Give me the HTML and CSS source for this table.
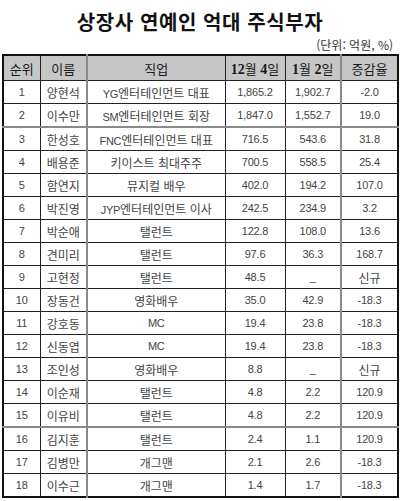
FILE: index.html
```html
<!DOCTYPE html>
<html lang="ko">
<head>
<meta charset="utf-8">
<title>상장사 연예인 억대 주식부자</title>
<link rel="stylesheet" href="styles.css">
</head>
<body>
<div class="page">
  <h1 class="title">상장사 연예인 억대 주식부자</h1>
  <div class="unit">(단위: 억원, %)</div>
  <table class="stock">
    <colgroup>
      <col class="c1"><col class="c2"><col class="c3"><col class="c4"><col class="c5"><col class="c6">
    </colgroup>
    <thead>
      <tr>
        <th>순위</th><th class="gl">이름</th><th>직업</th><th><span class="d">12</span>월 <span class="d">4</span>일</th><th class="gr"><span class="d">1</span>월 <span class="d">2</span>일</th><th>증감율</th>
      </tr>
    </thead>
    <tbody>
      <tr><td class="n">1</td><td class="gl">양현석</td><td><span class="en">YG</span>엔터테인먼트 대표</td><td class="n">1,865.2</td><td class="n gr">1,902.7</td><td class="n">-2.0</td></tr>
      <tr class="thick"><td class="n">2</td><td class="gl">이수만</td><td><span class="en">SM</span>엔터테인먼트 회장</td><td class="n">1,847.0</td><td class="n gr">1,552.7</td><td class="n">19.0</td></tr>
      <tr><td class="n">3</td><td class="gl">한성호</td><td><span class="en">FNC</span>엔터테인먼트 대표</td><td class="n">716.5</td><td class="n gr">543.6</td><td class="n">31.8</td></tr>
      <tr><td class="n">4</td><td class="gl">배용준</td><td>키이스트 최대주주</td><td class="n">700.5</td><td class="n gr">558.5</td><td class="n">25.4</td></tr>
      <tr><td class="n">5</td><td class="gl">함연지</td><td>뮤지컬 배우</td><td class="n">402.0</td><td class="n gr">194.2</td><td class="n">107.0</td></tr>
      <tr><td class="n">6</td><td class="gl">박진영</td><td><span class="en">JYP</span>엔터테인먼트 이사</td><td class="n">242.5</td><td class="n gr">234.9</td><td class="n">3.2</td></tr>
      <tr><td class="n">7</td><td class="gl">박순애</td><td>탤런트</td><td class="n">122.8</td><td class="n gr">108.0</td><td class="n">13.6</td></tr>
      <tr><td class="n">8</td><td class="gl">견미리</td><td>탤런트</td><td class="n">97.6</td><td class="n gr">36.3</td><td class="n">168.7</td></tr>
      <tr><td class="n">9</td><td class="gl">고현정</td><td>탤런트</td><td class="n">48.5</td><td class="n gr">_</td><td>신규</td></tr>
      <tr><td class="n">10</td><td class="gl">장동건</td><td>영화배우</td><td class="n">35.0</td><td class="n gr">42.9</td><td class="n">-18.3</td></tr>
      <tr><td class="n">11</td><td class="gl">강호동</td><td class="en">MC</td><td class="n">19.4</td><td class="n gr">23.8</td><td class="n">-18.3</td></tr>
      <tr><td class="n">12</td><td class="gl">신동엽</td><td class="en">MC</td><td class="n">19.4</td><td class="n gr">23.8</td><td class="n">-18.3</td></tr>
      <tr><td class="n">13</td><td class="gl">조인성</td><td>영화배우</td><td class="n">8.8</td><td class="n gr">_</td><td>신규</td></tr>
      <tr><td class="n">14</td><td class="gl">이순재</td><td>탤런트</td><td class="n">4.8</td><td class="n gr">2.2</td><td class="n">120.9</td></tr>
      <tr class="thick"><td class="n">15</td><td class="gl">이유비</td><td>탤런트</td><td class="n">4.8</td><td class="n gr">2.2</td><td class="n">120.9</td></tr>
      <tr><td class="n">16</td><td class="gl">김지훈</td><td>탤런트</td><td class="n">2.4</td><td class="n gr">1.1</td><td class="n">120.9</td></tr>
      <tr><td class="n">17</td><td class="gl">김병만</td><td>개그맨</td><td class="n">2.1</td><td class="n gr">2.6</td><td class="n">-18.3</td></tr>
      <tr><td class="n">18</td><td class="gl">이수근</td><td>개그맨</td><td class="n">1.4</td><td class="n gr">1.7</td><td class="n">-18.3</td></tr>
    </tbody>
  </table>
</div>
</body>
</html>
```

FILE: styles.css
```css
html, body {
  margin: 0;
  padding: 0;
  background: #ffffff;
}
.page {
  width: 400px;
  padding: 9px 0 0 2px;
  box-sizing: border-box;
  font-family: "Noto Sans CJK KR", "Noto Sans", sans-serif;
}
.title {
  margin: 0;
  height: 26px;
  line-height: 26px;
  text-align: center;
  font-size: 20px;
  font-weight: bold;
  letter-spacing: 0.6px;
  color: #111;
  padding-right: 2px;
}
.unit {
  height: 19px;
  line-height: 19px;
  text-align: right;
  font-size: 12px;
  color: #333;
  padding-right: 7px;
}
.stock {
  border-collapse: collapse;
  table-layout: fixed;
  width: 395px;
  border: 2px solid #111;
}
.c1 { width: 37px; }
.c2 { width: 47px; }
.c3 { width: 138px; }
.c4 { width: 60px; }
.c5 { width: 56px; }
.c6 { width: 57px; }
.stock th,
.stock td {
  padding: 0;
  text-align: center;
  white-space: nowrap;
  overflow: hidden;
  border: 1px solid #222;
}
.stock th {
  height: 24px;
  background: #c6c6c6;
  font-size: 13px;
  font-weight: normal;
  color: #1a1a1a;
}
.stock th .d {
  font-family: "Liberation Serif", serif;
  font-weight: bold;
  font-size: 14px;
}
.stock td {
  height: 22px;
  font-size: 12px;
  color: #444;
}
.stock td.n {
  font-family: "Liberation Sans", sans-serif;
  font-size: 11px;
  letter-spacing: -0.2px;
}
.stock .en {
  font-family: "Liberation Sans", sans-serif;
  font-size: 11px;
  letter-spacing: -0.3px;
}
.stock .gl {
  border-right: 2px solid #8a8a8a;
}
.stock .gr {
  border-right: 2px solid #8a8a8a;
}
.stock tr.thick td {
  border-bottom: 2px solid #8a8a8a;
}
```
